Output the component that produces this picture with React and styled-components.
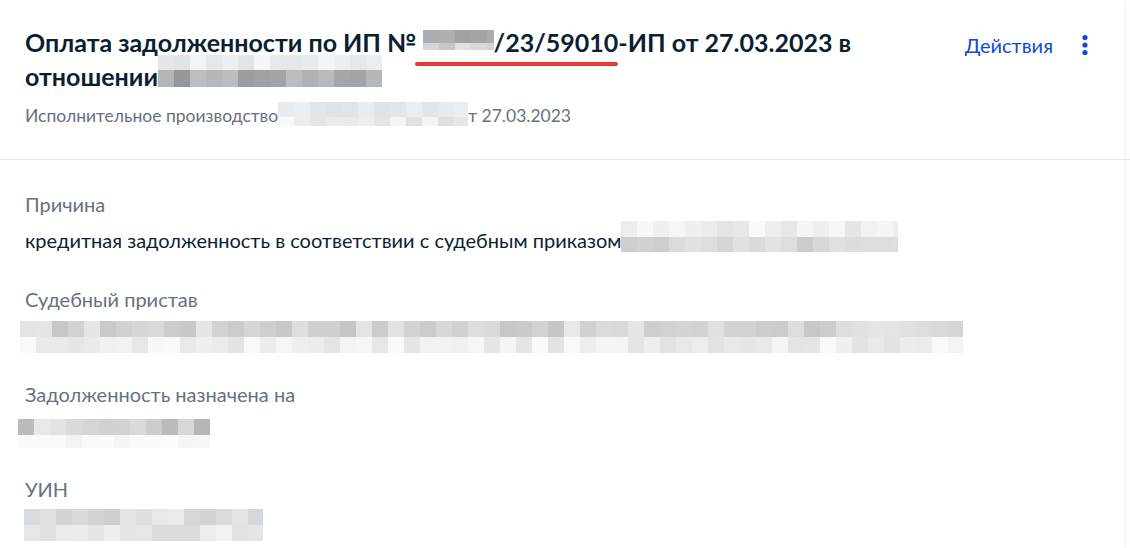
import React from 'react';
import styled, { createGlobalStyle } from 'styled-components';

const GlobalStyle = createGlobalStyle`
  body {
    margin: 0;
    background: #ffffff;
    font-family: 'Lato', 'Noto Sans', sans-serif;
    color: #0b1f33;
  }
`;

// pixelated "redacted" blocks, colours picked from a seeded generator
const rand = (seed) => {
  let s = seed;
  return () => {
    s = (s * 9301 + 49297) % 233280;
    return s / 233280;
  };
};

const Mosaic = ({ width, rows, seed = 1, cell = 16, inline, ...rest }) => {
  const next = rand(seed);
  const cols = Math.ceil(width / cell);
  return (
    <MosaicBox $inline={inline} $w={width} {...rest}>
      {rows.map((r, i) => (
        <MosaicRow key={i} $h={r.h}>
          {Array.from({ length: cols }).map((_, j) => {
            const v = Math.round(r.min + next() * (r.max - r.min));
            return (
              <MosaicCell
                key={j}
                style={{ background: `rgb(${v - 2}, ${v + 1}, ${v + 4})` }}
              />
            );
          })}
        </MosaicRow>
      ))}
    </MosaicBox>
  );
};

const Kebab = () => (
  <svg width="24" height="24" viewBox="0 0 24 24">
    <circle cx="12" cy="4.5" r="2.6" fill="#0d4cd3" />
    <circle cx="12" cy="12" r="2.6" fill="#0d4cd3" />
    <circle cx="12" cy="19.5" r="2.6" fill="#0d4cd3" />
  </svg>
);

const App = () => (
  <>
    <GlobalStyle />
    <Card>
      <Header>
        <HeaderText>
          <Title>
            {'Оплата задолженности по ИП № '}
            <Marked>
              <Mosaic
                inline
                width={71}
                seed={7}
                rows={[{ h: 13, min: 158, max: 188 }, { h: 7, min: 198, max: 228 }]}
                $va={2}
                $mt={0}
              />
              /23/59010
            </Marked>
            {'-ИП от 27.03.2023 в'}
            <br />
            {'отношении'}
            <Mosaic
              inline
              width={224}
              seed={3}
              rows={[{ h: 15, min: 222, max: 246 }, { h: 17, min: 150, max: 195 }]}
              $va={-1}
              $mt={-6}
            />
          </Title>
          <Subtitle>
            Исполнительное производство
            <Mosaic
              inline
              width={190}
              seed={11}
              rows={[{ h: 15, min: 224, max: 240 }, { h: 9, min: 222, max: 250 }]}
              $va={-4}
              $mt={-4}
            />
            т 27.03.2023
          </Subtitle>
        </HeaderText>
        <Actions>
          <ActionLink>Действия</ActionLink>
          <Kebab />
        </Actions>
      </Header>
      <Body>
        <Field>
          <Label>Причина</Label>
          <Value>
            кредитная задолженность в соответствии с судебным приказом
            <Mosaic
              inline
              width={277}
              seed={5}
              rows={[{ h: 16, min: 228, max: 250 }, { h: 15, min: 200, max: 228 }]}
              $va={-4}
              $mt={-10}
            />
          </Value>
        </Field>
        <Field>
          <Label>Судебный пристав</Label>
          <Value>
            <Mosaic
              width={943}
              seed={17}
              rows={[{ h: 16, min: 196, max: 232 }, { h: 16, min: 226, max: 250 }]}
              $mt={-2}
              $ml={-5}
            />
          </Value>
        </Field>
        <Field>
          <Label>Задолженность назначена на</Label>
          <Value>
            <Mosaic
              width={192}
              seed={23}
              rows={[{ h: 16, min: 180, max: 236 }, { h: 13, min: 242, max: 252 }]}
              $mt={1}
              $ml={-7}
            />
          </Value>
        </Field>
        <Field>
          <Label>УИН</Label>
          <Value>
            <Mosaic
              width={239}
              seed={31}
              rows={[{ h: 16, min: 206, max: 236 }, { h: 16, min: 218, max: 242 }]}
              $mt={-4}
              $ml={-1}
            />
          </Value>
        </Field>
      </Body>
    </Card>
  </>
);

export default App;

const Card = styled.div`
  width: 1124px;
  min-height: 548px;
  background: #ffffff;
  box-shadow: 2px 0 6px rgba(40, 60, 90, 0.06);
`;

const Header = styled.div`
  display: flex;
  justify-content: space-between;
  align-items: flex-start;
  padding: 25px 33px 31px 25px;
  border-bottom: 1px solid #e4e9f2;
  margin-right: -6px;
`;

const HeaderText = styled.div`
  width: 900px;
`;

const Title = styled.h1`
  margin: 0;
  font-size: 25px;
  line-height: 34px;
  font-weight: 700;
  color: #0b1f33;
`;

const Marked = styled.span`
  position: relative;

  &::after {
    content: '';
    position: absolute;
    left: -8px;
    right: 0;
    bottom: -9px;
    height: 4px;
    border-radius: 3px;
    background: #e53935;
  }
`;

const Subtitle = styled.div`
  margin-top: 11px;
  font-size: 17.5px;
  line-height: 24px;
  color: #66727f;
`;

const Actions = styled.div`
  display: flex;
  align-items: center;
  gap: 20px;
  margin-top: 8px;
`;

const ActionLink = styled.span`
  font-size: 20px;
  line-height: 24px;
  color: #0d4cd3;
  cursor: pointer;
`;

const Body = styled.div`
  display: flex;
  flex-direction: column;
  gap: 35px;
  padding: 32px 25px 0;
`;

const Field = styled.div`
  display: flex;
  flex-direction: column;
  gap: 12px;
`;

const Label = styled.div`
  font-size: 20px;
  line-height: 24px;
  color: #66727f;
`;

const Value = styled.div`
  font-size: 20px;
  line-height: 24px;
  height: 24px;
  color: #0b1f33;
  white-space: nowrap;
`;

const MosaicBox = styled.div`
  display: ${(p) => (p.$inline ? 'inline-block' : 'block')};
  width: ${(p) => p.$w}px;
  vertical-align: ${(p) => p.$va || 0}px;
  margin-top: ${(p) => p.$mt || 0}px;
  margin-left: ${(p) => p.$ml || 0}px;
  overflow: hidden;
`;

const MosaicRow = styled.div`
  display: flex;
  height: ${(p) => p.$h}px;
`;

const MosaicCell = styled.div`
  flex: 0 0 16px;
  height: 100%;
`;
